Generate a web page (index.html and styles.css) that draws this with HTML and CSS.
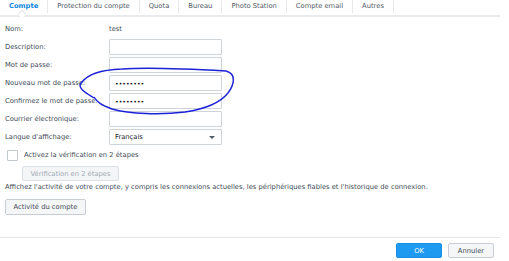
FILE: index.html
```html
<!DOCTYPE html>
<html lang="fr">
<head>
    <meta charset="UTF-8">
    <title>Compte</title>
    <link rel="stylesheet" href="styles.css">
</head>
<body>
    <div class="dialog">
        <ul class="tabs">
            <li class="tab active">Compte</li>
            <li class="tab">Protection du compte</li>
            <li class="tab">Quota</li>
            <li class="tab">Bureau</li>
            <li class="tab">Photo Station</li>
            <li class="tab">Compte email</li>
            <li class="tab">Autres</li>
        </ul>

        <form class="account-form">
            <div class="row">
                <label>Nom:</label>
                <span class="value">test</span>
            </div>
            <div class="row">
                <label for="desc">Description:</label>
                <input type="text" id="desc" class="field">
            </div>
            <div class="row">
                <label for="pwd">Mot de passe:</label>
                <input type="password" id="pwd" class="field">
            </div>
            <div class="row">
                <label for="newpwd">Nouveau mot de passe:</label>
                <input type="password" id="newpwd" class="field" value="abcdefgh">
            </div>
            <div class="row">
                <label for="confpwd">Confirmez le mot de passe:</label>
                <input type="password" id="confpwd" class="field" value="abcdefgh">
            </div>
            <div class="row">
                <label for="mail">Courrier électronique:</label>
                <input type="text" id="mail" class="field">
            </div>
            <div class="row">
                <label>Langue d'affichage:</label>
                <div class="field select">
                    <span>Français</span>
                    <span class="caret"></span>
                </div>
            </div>

            <div class="check-row">
                <span class="checkbox"></span>
                <span>Activez la vérification en 2 étapes</span>
            </div>
            <button type="button" class="btn btn-disabled">Vérification en 2 étapes</button>

            <p class="note">Affichez l'activité de votre compte, y compris les connexions actuelles, les périphériques fiables et l'historique de connexion.</p>
            <button type="button" class="btn btn-activity">Activité du compte</button>

            <!-- trait au stylo par-dessus les champs -->
            <svg class="scribble" width="509" height="261" viewBox="0 0 509 261">
                <path d="M94 101 C86 96 77 91 81 86 C88 77 100 73 122 72 C150 70 190 72 226 74 C237 77 234 88 228 96 C220 106 205 112 185 115 C160 118 130 117 112 112 C101 108 97 105 94 100" fill="none" stroke="#1c22d8" stroke-width="1.4"/>
            </svg>
        </form>

        <div class="footer">
            <button type="button" class="btn btn-primary">OK</button>
            <button type="button" class="btn btn-cancel">Annuler</button>
        </div>
    </div>
</body>
</html>
```

FILE: styles.css
```css
body {
    margin: 0;
    background-color: #fff;
    font-family: "DejaVu Sans", Verdana, sans-serif;
    font-size: 6.75px;
    color: #414b55;
}
.dialog {
    width: 500px;
    height: 261px;
    display: flex;
    flex-direction: column;
}
.tabs {
    list-style: none;
    margin: 0;
    padding: 0;
    display: flex;
    height: 15px;
    border-bottom: 2px solid #e8eaed;
}
.tab {
    position: relative;
    padding: 0 9px;
    line-height: 12px;
    height: 13px;
    color: #505a64;
    border-right: 1px solid #e6e8eb;
}
.tab.active {
    color: #0d86e0;
    font-weight: bold;
}
.tab.active::after {
    content: "";
    position: absolute;
    left: 19px;
    bottom: -4px;
    width: 5px;
    height: 5px;
    background-color: #fff;
    border-left: 1px solid #e3e5e8;
    border-top: 1px solid #e3e5e8;
    transform: rotate(45deg);
}
.account-form {
    position: relative;
    padding: 3px 0 0 5px;
}
.row {
    display: grid;
    grid-template-columns: 104px 113px;
    align-items: center;
    height: 18px;
}
.row label {
    color: #414b55;
}
.value {
    color: #414b55;
}
.field {
    box-sizing: border-box;
    width: 113px;
    height: 16px;
    margin: 0;
    padding: 0 5px;
    border: 1px solid #cfd4db;
    border-radius: 1px;
    background-color: #fff;
    font-family: inherit;
    font-size: 6.75px;
    color: #1e2328;
    outline: none;
}
input[type="password"] {
    font-size: 6.2px;
    color: #111;
}
.select {
    display: flex;
    align-items: center;
    justify-content: space-between;
    padding: 0 6px 0 5px;
}
.caret {
    width: 0;
    height: 0;
    border-left: 3px solid transparent;
    border-right: 3px solid transparent;
    border-top: 3px solid #505a64;
}
.check-row {
    display: flex;
    align-items: center;
    gap: 6px;
    height: 14px;
    margin-top: 2px;
    padding-left: 2px;
}
.checkbox {
    box-sizing: border-box;
    width: 11px;
    height: 11px;
    border: 1px solid #c3c8d0;
    border-radius: 1px;
    background-color: #fff;
}
.btn {
    box-sizing: border-box;
    height: 16px;
    padding: 0;
    border: 1px solid #c8cdd5;
    border-radius: 2px;
    background-color: #f5f6f8;
    font-family: inherit;
    font-size: 6.75px;
    color: #414b55;
    cursor: pointer;
}
.btn-disabled {
    display: block;
    margin: 4px 0 0 17px;
    width: 97px;
    height: 15px;
    border-color: #dde1e6;
    background-color: #f3f5f7;
    color: #a2abb5;
}
.note {
    margin: 0;
    line-height: 12px;
}
.btn-activity {
    display: block;
    margin-top: 6px;
    width: 81px;
}
.scribble {
    position: absolute;
    left: 0;
    top: -20px;
    pointer-events: none;
}
.footer {
    margin-top: auto;
    height: 24px;
    border-top: 1px solid #e4e6e9;
    display: flex;
    justify-content: flex-end;
    align-items: flex-start;
    gap: 6px;
    padding: 5px 6px 0 0;
    box-sizing: border-box;
}
.btn-primary {
    width: 46px;
    height: 15px;
    border-color: #1a8ee6;
    background-color: #1e9af0;
    color: #fff;
}
.btn-cancel {
    width: 46px;
    height: 15px;
}
```
